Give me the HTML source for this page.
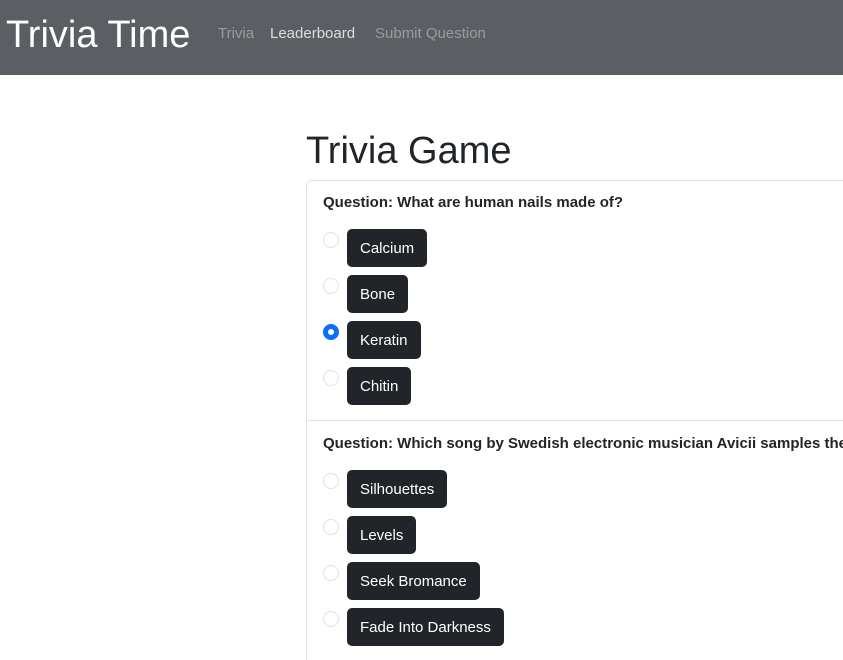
<!DOCTYPE html>
<html style="height:660px;overflow:hidden"><head><style>
body{margin:0;font-family:"Liberation Sans",sans-serif;background:#fff;color:#212529;width:843px;height:660px;overflow:hidden;position:relative}
.nav{position:absolute;left:0;top:0;width:843px;height:75px;background:#5b5e62}
.brand{position:absolute;left:6px;top:14px;font-size:38px;color:#fff;white-space:nowrap}
.link{position:absolute;top:25px;font-size:15px;color:#9a9c9f;white-space:nowrap}
h1{position:absolute;left:306px;top:130px;margin:0;font-size:38px;font-weight:400;white-space:nowrap}
.card{position:absolute;left:306px;top:180px;width:537px;height:480px;border:1px solid #dee2e6;border-bottom:none;border-right:none;border-radius:6px 0 0 0;box-sizing:border-box}
.sep{position:absolute;left:306px;top:420px;width:537px;border-top:1px solid #dee2e6}
.q{position:absolute;left:323px;font-size:15px;font-weight:bold;white-space:nowrap;width:520px;overflow:hidden}
.r{position:absolute;left:323px;width:14px;height:14px;border:1px solid #dee2e6;border-radius:50%;background:#fff}
.r.on{background:#0d6efd;border-color:#0d6efd}
.r.on::after{content:"";position:absolute;left:4px;top:4px;width:6px;height:6px;border-radius:50%;background:#fff}
.b{position:absolute;left:347px;height:38px;line-height:40px;padding:0 13px;background:#212529;color:#fff;border-radius:5px;font-size:15px;white-space:nowrap}
</style></head><body>
<div class="nav">
<div class="brand">Trivia Time</div>
<div class="link" style="left:218px">Trivia</div>
<div class="link" style="left:270px;color:#dcdddf">Leaderboard</div>
<div class="link" style="left:375px">Submit Question</div>
</div>
<h1>Trivia Game</h1>
<div class="card"></div>
<div class="sep"></div>
<div class="q" style="top:194px">Question: What are human nails made of?</div>
<div class="r" style="top:232px"></div><div class="b" style="top:229px">Calcium</div>
<div class="r" style="top:278px"></div><div class="b" style="top:275px">Bone</div>
<div class="r on" style="top:324px"></div><div class="b" style="top:321px">Keratin</div>
<div class="r" style="top:370px"></div><div class="b" style="top:367px">Chitin</div>
<div class="q" style="top:435px">Question: Which song by Swedish electronic musician Avicii samples the</div>
<div class="r" style="top:473px"></div><div class="b" style="top:470px">Silhouettes</div>
<div class="r" style="top:519px"></div><div class="b" style="top:516px">Levels</div>
<div class="r" style="top:565px"></div><div class="b" style="top:562px">Seek Bromance</div>
<div class="r" style="top:611px"></div><div class="b" style="top:608px">Fade Into Darkness</div>
</body></html>
